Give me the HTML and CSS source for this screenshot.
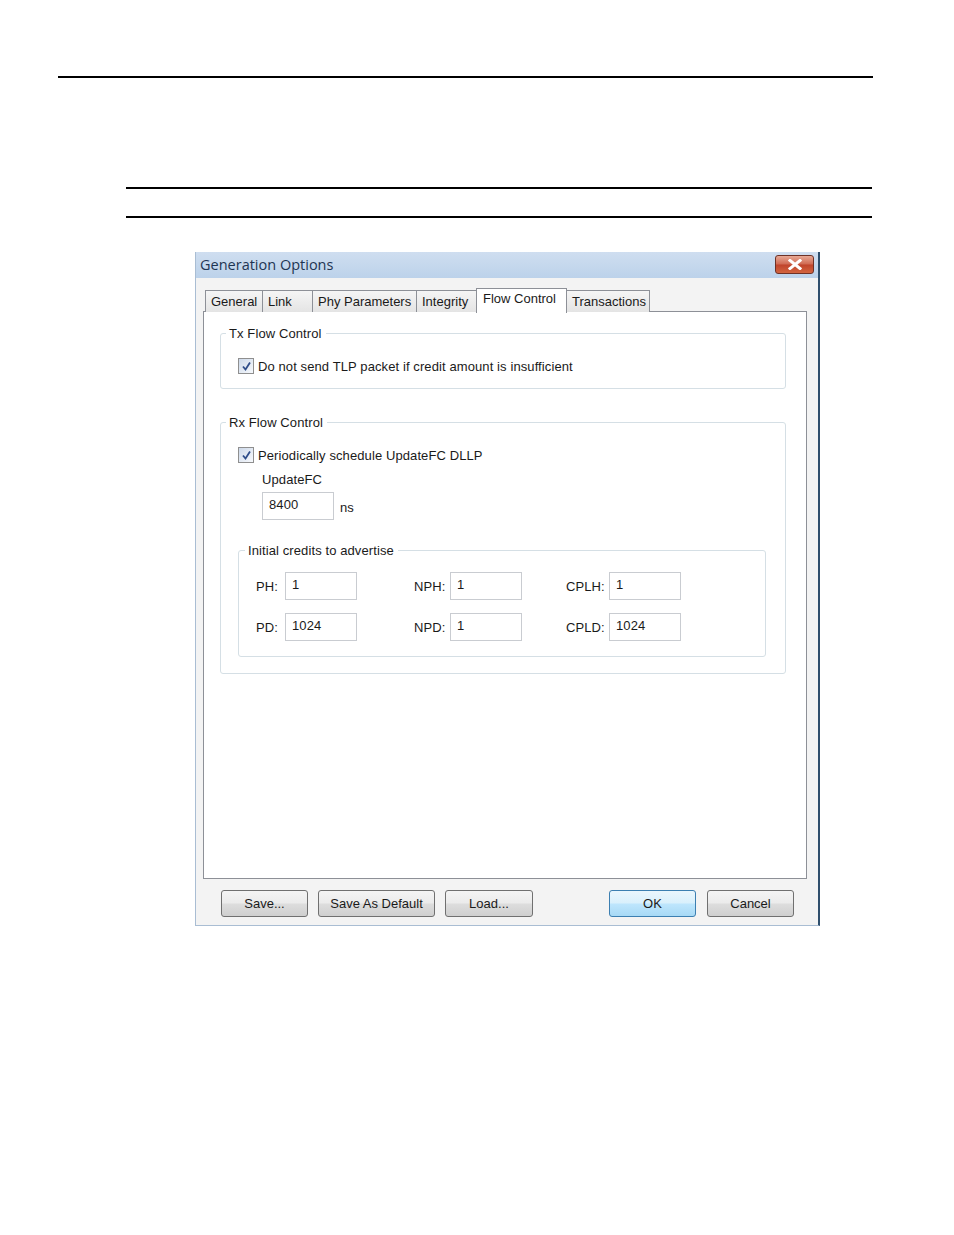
FILE: index.html
```html
<!DOCTYPE html>
<html lang="en">
<head>
    <meta charset="UTF-8">
    <title>Generation Options</title>
    <link rel="stylesheet" href="styles.css">
</head>
<body>
    <div class="rule rule-top"></div>
    <div class="rule rule-a"></div>
    <div class="rule rule-b"></div>

    <div class="dialog">
        <div class="titlebar">
            <span class="title">Generation Options</span>
            <span class="close">
                <svg width="14" height="11" viewBox="0 0 14 11">
                    <path d="M2 1.5 L12 9.5 M12 1.5 L2 9.5" stroke="#fff" stroke-width="3" stroke-linecap="square"/>
                </svg>
            </span>
        </div>

        <div class="tabs">
            <span class="tab" style="width: 58px">General</span>
            <span class="tab" style="width: 51px">Link</span>
            <span class="tab" style="width: 105px">Phy Parameters</span>
            <span class="tab" style="width: 61px">Integrity</span>
            <span class="tab active" style="width: 91px">Flow Control</span>
            <span class="tab" style="width: 84px">Transactions</span>
        </div>

        <div class="panel">
            <fieldset class="group group-tx">
                <legend>Tx Flow Control</legend>
                <label class="check">
                    <span class="box">
                        <svg width="11" height="11" viewBox="0 0 11 11"><path d="M2 5.5 L4.5 8.5 L9 1.5" fill="none" stroke="#2f4d8a" stroke-width="1.8"/></svg>
                    </span>
                    Do not send TLP packet if credit amount is insufficient
                </label>
            </fieldset>

            <fieldset class="group group-rx">
                <legend>Rx Flow Control</legend>
                <label class="check">
                    <span class="box">
                        <svg width="11" height="11" viewBox="0 0 11 11"><path d="M2 5.5 L4.5 8.5 L9 1.5" fill="none" stroke="#2f4d8a" stroke-width="1.8"/></svg>
                    </span>
                    Periodically schedule UpdateFC DLLP
                </label>
                <div class="update-label">UpdateFC</div>
                <div class="update-row">
                    <span class="field">8400</span>
                    <span class="unit">ns</span>
                </div>

                <fieldset class="group group-credits">
                    <legend>Initial credits to advertise</legend>
                    <div class="credits">
                        <span class="lbl">PH:</span><span class="field">1</span>
                        <span class="lbl">NPH:</span><span class="field">1</span>
                        <span class="lbl">CPLH:</span><span class="field">1</span>
                        <span class="lbl">PD:</span><span class="field">1024</span>
                        <span class="lbl">NPD:</span><span class="field">1</span>
                        <span class="lbl">CPLD:</span><span class="field">1024</span>
                    </div>
                </fieldset>
            </fieldset>
        </div>

        <div class="buttons">
            <div class="btn-group">
                <button class="btn">Save...</button>
                <button class="btn btn-wide">Save As Default</button>
                <button class="btn btn-load">Load...</button>
            </div>
            <div class="btn-group">
                <button class="btn btn-ok">OK</button>
                <button class="btn btn-cancel">Cancel</button>
            </div>
        </div>
    </div>
</body>
</html>
```

FILE: styles.css
```css
body {
    margin: 0;
    padding: 0;
    background-color: #fff;
    font-family: "Liberation Sans", Arial, sans-serif;
    font-size: 13px;
    letter-spacing: 0.1px;
    color: #1a1a1a;
}

.rule {
    height: 2px;
    background-color: #000;
}

.rule-top {
    margin: 76px 0 0 58px;
    width: 815px;
}

.rule-a {
    margin: 109px 0 0 126px;
    width: 746px;
}

.rule-b {
    margin: 27px 0 0 126px;
    width: 746px;
}

/* dialog window */
.dialog {
    box-sizing: border-box;
    margin: 34px 0 0 195px;
    width: 625px;
    height: 674px;
    background-color: #f3f3f3;
    border: 1px solid #a9bdd3;
    border-right: 2px solid #2f4e6c;
    border-top: none;
}

.titlebar {
    height: 26px;
    display: flex;
    justify-content: space-between;
    align-items: flex-start;
    padding: 0 4px 0 4px;
    background: linear-gradient(#cfdef0, #bcd2ea);
}

.title {
    font-family: "Open Sans", sans-serif;
    font-size: 14.5px;
    letter-spacing: 0;
    line-height: 26px;
    color: #1e3553;
}

.close {
    box-sizing: border-box;
    margin-top: 3px;
    width: 39px;
    height: 19px;
    display: flex;
    align-items: center;
    justify-content: center;
    border: 1px solid #6e3126;
    border-radius: 3px;
    background: linear-gradient(#e8a996, #d06a52 48%, #c0442b 52%, #d2643f);
}

/* tabs */
.tabs {
    display: flex;
    align-items: flex-end;
    height: 24px;
    margin: 10px 0 0 9px;
    position: relative;
    z-index: 1;
}

.tab {
    box-sizing: border-box;
    height: 22px;
    margin-right: -1px;
    padding: 0 5px;
    line-height: 21px;
    white-space: nowrap;
    letter-spacing: 0;
    border: 1px solid #8d9097;
    border-bottom: none;
    background: linear-gradient(#f5f5f5, #e4e4e4);
}

.tab.active {
    line-height: 20px;
    padding-left: 6px;
    background: #fff;
    position: relative;
    z-index: 2;
    margin-bottom: -1px;
    height: 25px;
}

.panel {
    box-sizing: border-box;
    margin: -1px 0 0 7px;
    width: 604px;
    height: 568px;
    background-color: #fff;
    border: 1px solid #8d9097;
    padding: 14px 20px 0 16px;
}

/* group boxes */
.group {
    margin: 0;
    padding: 0;
    border: 1px solid #d5dfe5;
    border-radius: 3px;
}

.group legend {
    margin-left: -12px;
    padding: 0 4px 0 3px;
    line-height: 15px;
}

.group-tx {
    padding: 17px 0 14px 17px;
}

.group-rx {
    margin-top: 26px;
    padding: 17px 19px 16px 17px;
}

.group-credits {
    margin-top: 23px;
    padding: 14px 0 15px 17px;
}

.group-credits legend {
    margin-left: -11px;
}

.check {
    display: flex;
    align-items: center;
    gap: 4px;
    height: 16px;
}

.box {
    box-sizing: border-box;
    width: 16px;
    height: 16px;
    display: flex;
    align-items: center;
    justify-content: center;
    border: 1px solid #8f8f8f;
    background: linear-gradient(135deg, #cdd9ea, #f7f9fc);
}

.update-label {
    margin: 9px 0 0 24px;
    line-height: 15px;
}

.update-row {
    display: flex;
    align-items: center;
    gap: 6px;
    margin: 5px 0 0 24px;
}

.unit {
    padding-top: 2px;
}

.field {
    box-sizing: border-box;
    display: block;
    width: 72px;
    height: 28px;
    padding: 4px 6px 0;
    line-height: 15px;
    border: 1px solid #c9ccd1;
    background-color: #fff;
}

.credits {
    display: grid;
    grid-template-columns: 29px 129px 36px 116px 43px 72px;
    row-gap: 13px;
    align-items: center;
}

.lbl {
    padding-top: 1px;
}

/* bottom buttons */
.buttons {
    display: flex;
    justify-content: space-between;
    margin-top: 11px;
    padding: 0 24px 0 25px;
}

.btn-group {
    display: flex;
    gap: 10px;
}

.btn {
    box-sizing: border-box;
    width: 87px;
    height: 27px;
    font-family: "Liberation Sans", Arial, sans-serif;
    font-size: 13px;
    color: #1a1a1a;
    border: 1px solid #707070;
    border-radius: 3px;
    background: linear-gradient(#f4f4f4, #ebebeb 48%, #dddddd 52%, #cfcfcf);
    padding: 0;
}

.btn-wide {
    width: 117px;
}

.btn-load {
    width: 88px;
}

.btn-ok {
    border-color: #3c7fb1;
    background: linear-gradient(#eaf6fd, #d9f0fc 48%, #bee6fd 52%, #a7d9f5);
}

.btn-cancel {
    margin-left: 1px;
}
```
